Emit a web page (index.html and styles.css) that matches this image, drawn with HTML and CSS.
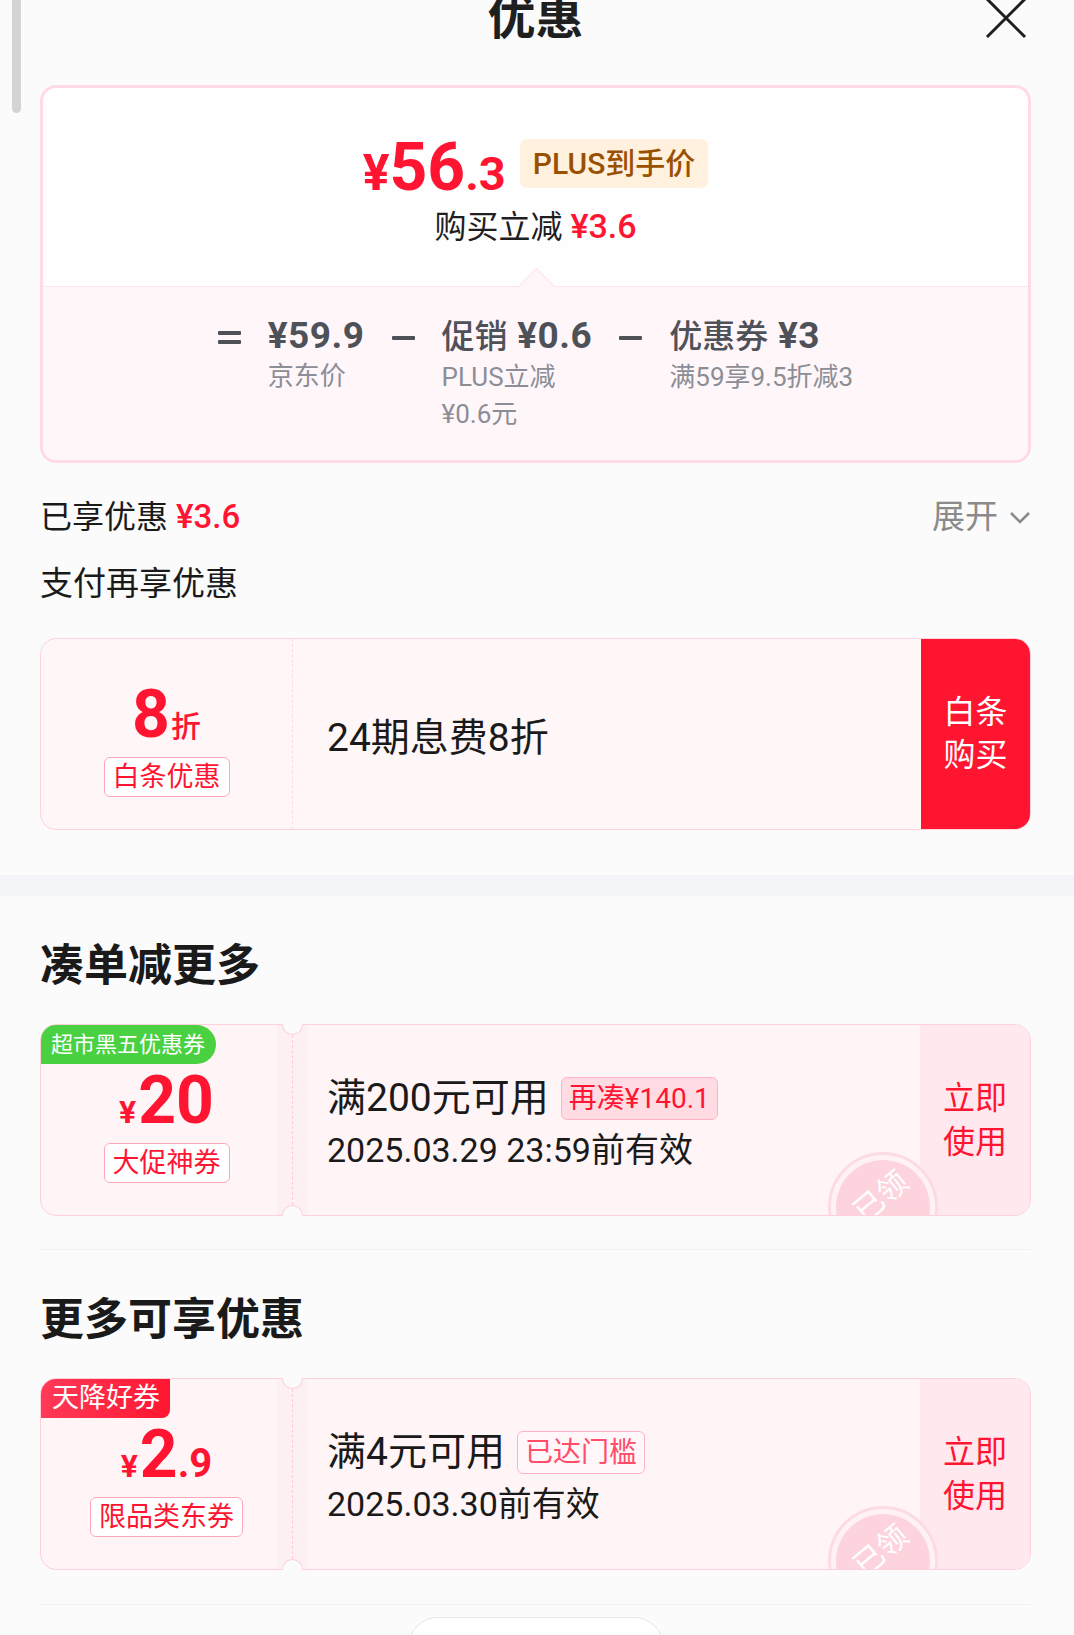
FILE: index.html
```html
<!DOCTYPE html>
<html lang="zh-CN">
<head>
    <meta charset="UTF-8">
    <meta name="viewport" content="width=device-width, initial-scale=1.0">
    <title>优惠</title>
    <link rel="stylesheet" href="styles.css">
</head>
<body>
    <div class="scrollbar"></div>
    <div class="sheet">
        <header class="sheet-head">
            <h1>优惠</h1>
            <button class="close" aria-label="关闭">
                <svg width="42" height="42" viewBox="0 0 42 42"><path d="M2 2L40 40M40 2L2 40" stroke="#1f1f1f" stroke-width="3" fill="none"/></svg>
            </button>
        </header>

        <section class="summary">
            <div class="summary-top">
                <div class="final-row">
                    <div class="final-price"><span class="cur">¥</span><span class="int">56</span><span class="dec">.3</span></div>
                    <span class="plus-tag">PLUS到手价</span>
                </div>
                <p class="saved-line">购买立减 <em>¥3.6</em></p>
            </div>
            <div class="summary-calc">
                <span class="op"><i></i><i></i></span>
                <div class="term"><b>¥59.9</b><small>京东价</small></div>
                <span class="op"><i></i></span>
                <div class="term"><b><span class="cn">促销</span> ¥0.6</b><small>PLUS立减<br>¥0.6元</small></div>
                <span class="op"><i></i></span>
                <div class="term"><b><span class="cn">优惠券</span> ¥3</b><small>满59享9.5折减3</small></div>
            </div>
        </section>

        <div class="enjoyed">
            <span>已享优惠 <em>¥3.6</em></span>
            <span class="expand">展开
                <svg width="22" height="13" viewBox="0 0 22 13"><path d="M2 2L11 11L20 2" stroke="#8a8a8a" stroke-width="2.6" fill="none"/></svg>
            </span>
        </div>
        <h3 class="pay-title">支付再享优惠</h3>

        <div class="baitiao">
            <div class="ticket-left">
                <div class="amount"><span class="int">8</span><span class="unit">折</span></div>
                <span class="ticket-tag">白条优惠</span>
            </div>
            <div class="baitiao-main">24期息费8折</div>
            <div class="baitiao-btn">白条<br>购买</div>
        </div>

        <div class="band"></div>

        <h2 class="section-title">凑单减更多</h2>
        <div class="coupon">
            <div class="coupon-body">
                <span class="corner corner-green">超市黑五优惠券</span>
                <div class="ticket-left">
                    <div class="amount"><span class="cur">¥</span><span class="int">20</span></div>
                    <span class="ticket-tag">大促神券</span>
                </div>
                <div class="coupon-main">
                    <div class="cond">满200元可用<span class="cond-tag">再凑¥140.1</span></div>
                    <div class="valid">2025.03.29 23:59前有效</div>
                </div>
                <div class="coupon-use">立即<br>使用</div>
                <div class="stamp"><span>已领</span></div>
            </div>
            <i class="notch notch-top"></i>
            <i class="notch notch-bottom"></i>
        </div>

        <div class="divider"></div>

        <h2 class="section-title">更多可享优惠</h2>
        <div class="coupon">
            <div class="coupon-body">
                <span class="corner corner-red">天降好券</span>
                <div class="ticket-left">
                    <div class="amount"><span class="cur">¥</span><span class="int">2</span><span class="dec">.9</span></div>
                    <span class="ticket-tag">限品类东券</span>
                </div>
                <div class="coupon-main">
                    <div class="cond">满4元可用<span class="cond-tag cond-tag-done">已达门槛</span></div>
                    <div class="valid">2025.03.30前有效</div>
                </div>
                <div class="coupon-use">立即<br>使用</div>
                <div class="stamp"><span>已领</span></div>
            </div>
            <i class="notch notch-top"></i>
            <i class="notch notch-bottom"></i>
        </div>

        <div class="divider divider-end"></div>
        <div class="more-pill"></div>
    </div>
</body>
</html>
```

FILE: styles.css
```css
* { margin: 0; padding: 0; box-sizing: border-box; }
body {
    font-family: Roboto, "Noto Sans CJK SC", sans-serif;
    background: #fbfbfb;
    color: #1a1a1a;
    overflow: hidden;
}
em { font-style: normal; color: #ff1432; }

.scrollbar {
    position: absolute;
    left: 12px; top: 0;
    width: 9px; height: 113px;
    background: #d4d4d4;
    border-radius: 0 0 5px 5px;
}
.sheet { padding: 0 43px 0 40px; }

/* header */
.sheet-head {
    position: relative;
    display: flex;
    justify-content: center;
    align-items: flex-start;
    height: 85px;
}
.sheet-head h1 {
    margin-top: -6px;
    font-size: 48px;
    line-height: 48px;
    font-weight: 700;
    color: #1f1f1f;
}
.close {
    position: absolute;
    right: 4px; top: -3px;
    border: none;
    background: none;
}
.close svg { display: block; }

/* price summary card */
.summary {
    border: 3px solid #ffd9e3;
    border-radius: 16px;
    background: #fefefe;
    overflow: hidden;
}
.summary-top { padding: 51px 0 37px; text-align: center; }
.final-row {
    display: flex;
    justify-content: center;
    align-items: flex-start;
    gap: 14px;
    height: 49px;
}
.final-price {
    margin-top: -4px;
    color: #ff1432;
    font-weight: 700;
    font-size: 66px;
    line-height: 49px;
    white-space: nowrap;
}
.final-price span { line-height: 1; }
.final-price .cur { font-size: 50px; }
.final-price .dec { font-size: 47px; }
.plus-tag {
    height: 49px;
    padding: 0 13px;
    border-radius: 7px;
    background: #fff1dd;
    color: #995000;
    font-size: 30px;
    font-weight: 500;
    line-height: 49px;
}
.saved-line {
    margin-top: 18px;
    margin-bottom: 2px;
    font-size: 32px;
    line-height: 40px;
    color: #1f1f1f;
}
.saved-line em { font-size: 34px; font-weight: 500; }
.summary-calc {
    position: relative;
    display: flex;
    justify-content: center;
    align-items: flex-start;
    gap: 27px;
    padding: 27px 0 27px;
    border-top: 1px solid #ffe4ec;
    background: #fff6f9;
}
.summary-calc::before {
    content: "";
    position: absolute;
    top: -14px; left: 50%;
    width: 24px; height: 24px;
    margin-left: -12px;
    background: #fff6f9;
    border-top: 1px solid #ffe4ec;
    border-left: 1px solid #ffe4ec;
    transform: rotate(45deg);
}
.op {
    display: flex;
    flex-direction: column;
    justify-content: center;
    gap: 5px;
    width: 23px;
    height: 44px;
    padding-top: 3px;
}
.op i {
    display: block;
    height: 4px;
    background: #4f5159;
    border-radius: 1px;
}
.term b {
    display: block;
    font-size: 37px;
    line-height: 44px;
    font-weight: 700;
    letter-spacing: 0.5px;
    color: #4f5159;
    white-space: nowrap;
}
.term b .cn { font-size: 33px; font-weight: 500; letter-spacing: 0; }
.term small {
    display: block;
    font-size: 26px;
    line-height: 37px;
    color: #8b8e96;
    white-space: nowrap;
}

/* enjoyed row */
.enjoyed {
    display: flex;
    justify-content: space-between;
    align-items: center;
    margin-top: 34px;
    height: 40px;
    font-size: 32px;
    line-height: 40px;
}
.enjoyed em { font-size: 33px; font-weight: 500; }
.expand {
    display: flex;
    align-items: center;
    gap: 11px;
    font-size: 33px;
    color: #8a8a8a;
}
.pay-title {
    margin-top: 27px;
    font-size: 33px;
    line-height: 40px;
    font-weight: 400;
}

/* ticket left column, shared */
.ticket-left {
    display: flex;
    flex-direction: column;
    align-items: center;
    padding-top: 43px;
}
.amount {
    color: #ff1432;
    font-weight: 700;
    font-size: 66px;
    line-height: 60px;
    white-space: nowrap;
}
.amount span { line-height: 1; }
.amount .cur { font-size: 32px; margin-right: 2px; }
.amount .dec { font-size: 40px; }
.amount .unit { font-size: 30px; font-weight: 500; margin-left: 1px; }
.ticket-tag {
    margin-top: 9px;
    height: 40px;
    padding: 0 8px;
    border: 1px solid #ffa6b8;
    border-radius: 6px;
    background: #fff;
    color: #ff1432;
    font-size: 27px;
    line-height: 38px;
}

/* baitiao card */
.baitiao {
    display: grid;
    grid-template-columns: 251px 1fr 109px;
    margin-top: 34px;
    height: 192px;
    border: 1px solid #ffd3dc;
    border-radius: 16px;
    background: #fff6f7;
    overflow: hidden;
}
.baitiao-main {
    display: flex;
    align-items: center;
    padding-left: 34px;
    border-left: 1px dashed #ffdbe3;
    font-size: 39px;
}
.baitiao-btn {
    display: flex;
    align-items: center;
    justify-content: center;
    background: #ff1530;
    color: #fff;
    font-size: 32px;
    line-height: 43px;
    text-align: center;
}

.band {
    height: 21px;
    margin: 45px -43px 0 -40px;
    background: #f4f5f9;
}
.section-title {
    margin-top: 42px;
    font-size: 44px;
    line-height: 56px;
    font-weight: 700;
}

/* coupons */
.coupon { position: relative; margin-top: 30px; }
.coupon-body {
    position: relative;
    display: grid;
    grid-template-columns: 251px 1fr 110px;
    height: 192px;
    border: 1px solid #ffd0da;
    border-radius: 16px;
    background: #fff5f7;
    overflow: hidden;
}
.coupon-body .ticket-left {
    background: linear-gradient(90deg, transparent 236px, #fcf0f3 236px);
}
.corner {
    position: absolute;
    left: 0; top: 0;
    color: #fff;
    white-space: nowrap;
}
.corner-green {
    height: 39px;
    padding: 0 11px 0 10px;
    background: #4ad142;
    border-radius: 0 20px 20px 0;
    font-size: 22px;
    line-height: 39px;
}
.corner-red {
    height: 39px;
    padding: 0 10px 0 11px;
    background: linear-gradient(90deg, #ff3a57, #ff1632);
    border-radius: 0 0 8px 0;
    font-size: 27px;
    line-height: 39px;
}
.coupon-main {
    padding: 52px 0 0 34px;
    border-left: 1px dashed #ffc9d5;
    background: linear-gradient(90deg, #fcf0f3 15px, transparent 15px);
}
.cond {
    display: flex;
    align-items: center;
    gap: 12px;
    height: 43px;
    font-size: 39px;
    line-height: 43px;
    white-space: nowrap;
}
.cond-tag {
    height: 43px;
    padding: 0 7px;
    border: 1px solid #ffb3c2;
    border-radius: 6px;
    background: #ffdbe3;
    color: #ff1432;
    font-size: 28px;
    line-height: 41px;
}
.cond-tag-done {
    background: #fff7f9;
    color: #ff4d6a;
}
.valid {
    margin-top: 10px;
    font-size: 34px;
    line-height: 40px;
    white-space: nowrap;
}
.coupon-use {
    display: flex;
    align-items: center;
    justify-content: center;
    background: #ffe9ef;
    color: #ff1432;
    font-size: 32px;
    line-height: 44px;
    text-align: center;
}
.stamp {
    position: absolute;
    left: 787px; top: 127px;
    width: 110px; height: 110px;
    border: 3px solid #fddbe2;
    border-radius: 50%;
    padding: 5px;
    background: #fff2f5;
}
.stamp span {
    display: flex;
    align-items: center;
    justify-content: center;
    width: 100%; height: 100%;
    padding: 0 0 24px 10px;
    border-radius: 50%;
    background: #fdd4dd;
    color: #fff;
    font-size: 30px;
    transform: rotate(-40deg);
}
.notch {
    position: absolute;
    left: 242px;
    width: 21px; height: 11px;
    background: #fbfbfb;
    border: 1px solid #ffd0da;
}
.notch-top { top: 0; border-top: none; border-radius: 0 0 11px 11px; }
.notch-bottom { bottom: 0; border-bottom: none; border-radius: 11px 11px 0 0; }

.divider {
    margin-top: 33px;
    height: 1px;
    background: #f1f1f1;
}
.divider-end { margin-top: 34px; }
.more-pill {
    width: 256px; height: 60px;
    margin: 12px auto 0;
    border: 1px solid #e6e6e6;
    border-radius: 30px;
    background: #fff;
}
```
